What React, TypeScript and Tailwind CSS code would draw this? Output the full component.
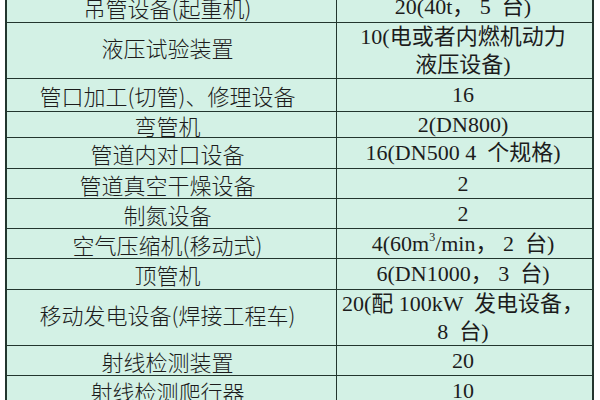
import React from 'react';

type Row = { name: string; qty: React.ReactNode; h: string; nameClass?: string; lead?: string };

const rows: Row[] = [
  { name: '吊管设备(起重机)', qty: '20(40t， 5  台)', h: 'h-[31px]' },
  {
    name: '液压试验装置',
    qty: (
      <>
        10(电或者内燃机动力
        <br />
        液压设备)
      </>
    ),
    h: 'h-[56px]',
    nameClass: 'pb-[8px]',
  },
  { name: '管口加工(切管)、修理设备', qty: '16', h: 'h-[33px]' },
  { name: '弯管机', qty: '2(DN800)', h: 'h-[26px]', lead: 'leading-[24px]' },
  { name: '管道内对口设备', qty: '16(DN500 4  个规格)', h: 'h-[31px]' },
  { name: '管道真空干燥设备', qty: '2', h: 'h-[30px]' },
  { name: '制氮设备', qty: '2', h: 'h-[30px]' },
  {
    name: '空气压缩机(移动式)',
    qty: (
      <>
        4(60m<sup className="text-[12px] top-[-0.8em]">3</sup>/min， 2  台)
      </>
    ),
    h: 'h-[30px]',
  },
  { name: '顶管机', qty: '6(DN1000， 3  台)', h: 'h-[31px]' },
  {
    name: '移动发电设备(焊接工程车)',
    qty: (
      <>
        20(配 100kW  发电设备，
        <br />8  台)
      </>
    ),
    h: 'h-[56px]',
    nameClass: 'pb-[8px]',
  },
  { name: '射线检测装置', qty: '20', h: 'h-[30px]' },
  { name: '射线检测爬行器', qty: '10', h: 'h-[30px]' },
];

export default function App() {
  return (
    <div className="w-[600px] h-[400px] overflow-hidden bg-white">
      <div className="ml-[5px] mt-[-8px] w-[589px] border-x-2 border-[#22362e] bg-[#d3f1e5] text-[#1c1c1c] text-[22px]">
        {rows.map((r, i) => (
          <div key={i} className={`flex border-b border-[#22362e] ${r.h}`}>
            <div
              className={`w-[330px] shrink-0 border-r border-[#22362e] flex items-center justify-center pr-[8px] font-light whitespace-nowrap ${r.lead ?? 'leading-[28px]'} ${r.nameClass ?? ''}`}
              style={{ fontFamily: '"Noto Sans CJK SC", sans-serif' }}
            >
              {r.name}
            </div>
            <div
              className={`flex-1 flex items-center justify-center text-center pr-[3px] whitespace-pre ${r.lead ?? 'leading-[28px]'}`}
              style={{ fontFamily: '"Liberation Serif", "Noto Sans CJK SC", serif' }}
            >
              <span>{r.qty}</span>
            </div>
          </div>
        ))}
      </div>
    </div>
  );
}
